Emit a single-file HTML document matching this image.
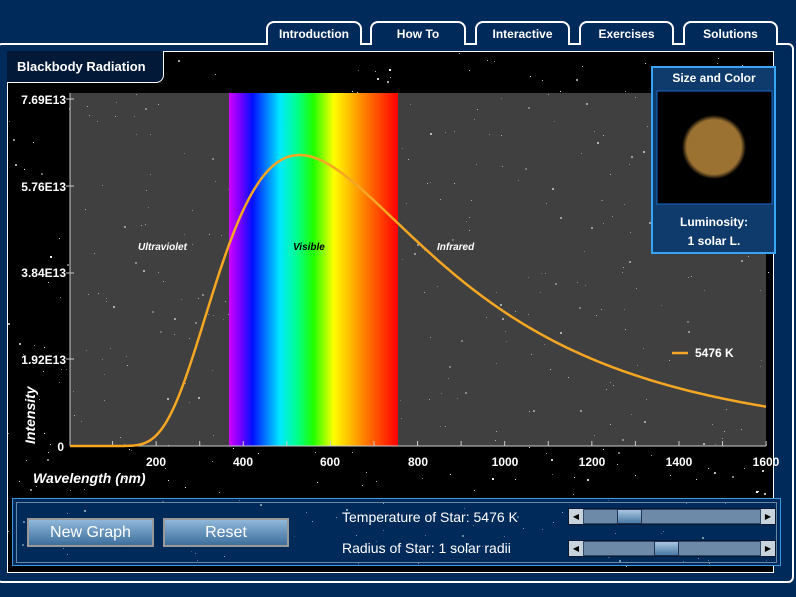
<!DOCTYPE html>
<html><head><meta charset="utf-8"><style>
*{margin:0;padding:0;box-sizing:border-box}
body{width:796px;height:597px;background:#002a5a;position:relative;overflow:hidden;font-family:"Liberation Sans",Arial,sans-serif}
.tab{position:absolute;top:21px;height:24px;border:2px solid #fff;border-bottom:none;border-radius:8px 8px 0 0;background:#002a5a;color:#fff;font-weight:bold;font-size:12px;text-align:center;line-height:22px}
.frame{position:absolute;left:-4px;top:43px;width:798px;height:540px;border:2px solid #fff;border-radius:6px}
.panel{position:absolute;left:7px;top:51px;width:767px;height:522px;border:1px solid #fff;background:#000}
.title{position:absolute;left:7px;top:51px;width:157px;height:32px;border:1px solid #fff;border-top:none;border-left:none;border-radius:0 0 8px 0;background:#021a38;color:#fff;font-weight:bold;font-size:13px;padding:8px 0 0 10px}
.lbl{position:absolute;color:#fff;font-weight:bold;font-size:12px}
.btn{position:absolute;top:518px;height:29px;border:2px solid #999;background:linear-gradient(#8fb7da,#3d6f9c);color:#fff;font-size:16px;text-align:center;line-height:25px}
.sl{position:absolute;left:568px;width:208px;height:17px;background:#2d4a6c;border:1px solid #0a1a30}
.sl .tr{position:absolute;left:15px;right:15px;top:1px;bottom:1px;background:#6d8aa8}
.sl .ar{position:absolute;top:0;width:14px;height:15px;background:#c9d3de;color:#000;font-size:8px;line-height:15px;text-align:center}
.sl .th{position:absolute;top:0;width:25px;height:15px;background:linear-gradient(#a9c6e2,#4b7aa6);border:1px solid #1b3554}
</style></head><body>
<div class="frame"></div>
<div class="tab" style="left:266px;width:96px">Introduction</div>
<div class="tab" style="left:370px;width:96px">How To</div>
<div class="tab" style="left:475px;width:95px">Interactive</div>
<div class="tab" style="left:579px;width:95px">Exercises</div>
<div class="tab" style="left:683px;width:95px">Solutions</div>
<div class="panel"></div>
<svg id="s" width="796" height="597" style="position:absolute;left:0;top:0">
<defs><linearGradient id="sp" x1="0" x2="1">
<stop offset="0" stop-color="#d000ff"/><stop offset=".06" stop-color="#8000ff"/><stop offset=".14" stop-color="#0010ff"/><stop offset=".3" stop-color="#00e8ff"/><stop offset=".4" stop-color="#00ff90"/><stop offset=".5" stop-color="#20ff00"/><stop offset=".62" stop-color="#ffff00"/><stop offset=".8" stop-color="#ff8000"/><stop offset="1" stop-color="#ff0000"/></linearGradient>
<radialGradient id="sun"><stop offset=".85" stop-color="#9c7232"/><stop offset="1" stop-color="#9c7232" stop-opacity="0"/></radialGradient></defs>
<g id="bgstars"></g>
<rect x="70" y="93" width="696" height="353" fill="#404040"/>
<g id="gstars"></g>
<rect x="229" y="93" width="169" height="353" fill="url(#sp)"/>
<line x1="70" y1="93" x2="70" y2="446" stroke="#ccc"/>
<line x1="70" y1="446" x2="766" y2="446" stroke="#ccc"/>
<g id="ticks" stroke="#ccc"></g>
<path id="curve" fill="none" stroke="#f5a623" stroke-width="2.5"/>
<g font-weight="bold" font-style="italic" font-size="10" fill="#fff">
<text x="138" y="250">Ultraviolet</text><text x="293" y="250" fill="#000">Visible</text><text x="437" y="250">Infrared</text></g>
<g font-weight="bold" font-size="12" fill="#fff" text-anchor="end">
<text x="66" y="104">7.69E13</text><text x="66" y="191">5.76E13</text><text x="66" y="277">3.84E13</text><text x="66" y="364">1.92E13</text><text x="64" y="451">0</text></g>
<g font-weight="bold" font-size="12" fill="#fff" text-anchor="middle">
<text x="156" y="466">200</text><text x="243" y="466">400</text><text x="330" y="466">600</text><text x="418" y="466">800</text><text x="505" y="466">1000</text><text x="592" y="466">1200</text><text x="679" y="466">1400</text><text x="766" y="466">1600</text></g>
<text x="33" y="483" font-weight="bold" font-style="italic" font-size="14" fill="#fff">Wavelength (nm)</text>
<text transform="translate(35,444) rotate(-90)" font-weight="bold" font-style="italic" font-size="14" fill="#fff">Intensity</text>
<line x1="672" y1="353" x2="688" y2="353" stroke="#f5a623" stroke-width="2.5"/>
<text x="695" y="357" font-weight="bold" font-size="12" fill="#fff">5476 K</text>
<rect x="652" y="67" width="123" height="186" fill="#0f3a6c" stroke="#3aa4f4" stroke-width="2"/>
<rect x="657" y="91" width="115" height="113" fill="#000" stroke="#1a6ad0" stroke-width="1"/>
<circle cx="714" cy="147" r="32" fill="url(#sun)"/>
<text x="714" y="82" text-anchor="middle" font-weight="bold" font-size="12" fill="#fff">Size and Color</text>
<text x="714" y="226" text-anchor="middle" font-weight="bold" font-size="12" fill="#fff">Luminosity:</text>
<text x="714" y="245" text-anchor="middle" font-weight="bold" font-size="12" fill="#fff">1 solar L.</text>
<rect x="12.5" y="498.5" width="768" height="67" fill="#002a5a" stroke="#3a9ae0"/>
<rect x="16.5" y="502.5" width="760" height="60" fill="none" stroke="#6688aa"/>
<g id="pstars"></g>
<text x="342" y="522" font-size="14" fill="#fff">Temperature of Star: 5476 K</text>
<text x="342" y="553" font-size="14" fill="#fff">Radius of Star: 1 solar radii</text>
</svg>
<div class="title">Blackbody Radiation</div>
<div class="btn" style="left:27px;width:127px">New Graph</div>
<div class="btn" style="left:163px;width:126px">Reset</div>
<div class="sl" style="top:508px"><div class="tr"></div><div class="ar" style="left:0">◀</div><div class="ar" style="right:0">▶</div><div class="th" style="left:48px"></div></div>
<div class="sl" style="top:540px"><div class="tr"></div><div class="ar" style="left:0">◀</div><div class="ar" style="right:0">▶</div><div class="th" style="left:85px"></div></div>
<script>
var ns="http://www.w3.org/2000/svg",seed=7;function r(){seed=(seed*16807)%2147483647;return seed/2147483647}
function stars(id,x,y,w,h,n,c){var g=document.getElementById(id);for(var i=0;i<n;i++){var e=document.createElementNS(ns,"rect");e.setAttribute("x",(x+r()*w).toFixed(0));e.setAttribute("y",(y+r()*h).toFixed(0));var s=r()<.2?2:1;e.setAttribute("width",s);e.setAttribute("height",s);e.setAttribute("fill",c);e.setAttribute("opacity",(0.4+r()*0.6).toFixed(2));g.appendChild(e)}}
stars("bgstars",8,52,765,520,500,"#fff");stars("gstars",70,93,696,353,300,"#bbb");stars("pstars",14,500,765,64,80,"#8ab");
var t=document.getElementById("ticks");for(var l=100;l<=1600;l+=100){var x=69+l*0.4357;var e=document.createElementNS(ns,"line");e.setAttribute("x1",x);e.setAttribute("x2",x);e.setAttribute("y1",446);e.setAttribute("y2",441);t.appendChild(e)}
[104-5,186,273,359].forEach(function(y){var e=document.createElementNS(ns,"line");e.setAttribute("x1",66);e.setAttribute("x2",74);e.setAttribute("y1",y);e.setAttribute("y2",y);t.appendChild(e)});
function B(l){var T=5476;l*=1e-9;return Math.pow(l,-5)/(Math.exp(0.014388/(l*T))-1)}
var pk=B(529),d="";for(var px=70;px<=766;px++){var l=(px-69)/0.4357;if(l<1)l=1;var y=446-(446-155)*B(l)/pk;d+=(d?"L":"M")+px+" "+y.toFixed(1)}
document.getElementById("curve").setAttribute("d",d);
</script>
</body></html>
